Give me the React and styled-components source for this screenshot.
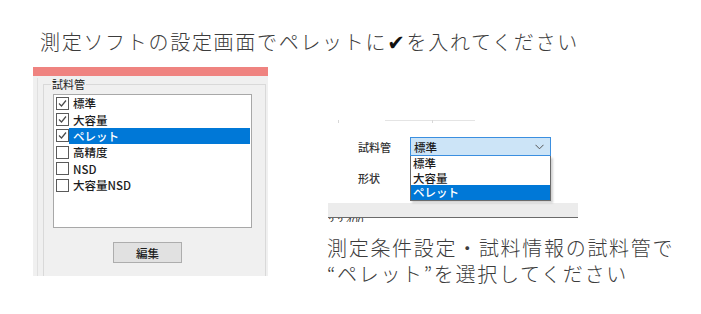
import React from "react";
import styled, { createGlobalStyle } from "styled-components";

const Global = createGlobalStyle`
  html, body { margin: 0; padding: 0; background: #ffffff; }
  body { font-family: "Noto Sans CJK JP", "Noto Sans", sans-serif; }
`;

const Page = styled.div`
  width: 701px;
  height: 314px;
  overflow: hidden;
  position: relative;
  background: #fff;
`;

const Caption = styled.div`
  font-family: "Noto Sans CJK JP", sans-serif;
  font-weight: 300;
  font-size: 20px;
  line-height: 26px;
  letter-spacing: 1.7px;
  color: #3c3c3c;
  white-space: nowrap;
`;

const Title = styled(Caption)`
  padding: 29px 0 0 40px;
`;

const Check = styled.span`
  font-family: "DejaVu Sans", sans-serif;
  font-weight: 700;
  color: #111;
  font-size: 21px;
`;

const Content = styled.div`
  display: flex;
  margin-top: 11px;
`;

const LeftPanel = styled.div`
  margin-left: 33px;
  width: 235px;
  height: 209px;
  display: flex;
  flex-direction: column;
  overflow: hidden;
`;

const PinkBar = styled.div`
  height: 9px;
  background: #ef8380;
`;

const GrayBody = styled.div`
  flex: 1;
  background: #f0f0f0;
  display: flex;
  padding: 2px 2px 0 4px;
  overflow: hidden;
`;

const Divider = styled.div`
  width: 1px;
  background: #e0e0e0;
  margin-right: 5px;
`;

const Group = styled.fieldset`
  margin: 0;
  padding: 0 0 0 9px;
  border: 1px solid #d9d9d9;
  flex: 1;
  height: 260px;
  min-width: 0;
`;

const Legend = styled.legend`
  font-size: 11px;
  line-height: 12px;
  color: #222;
  padding: 0 1px;
  margin-left: -2px;
`;

const ListBox = styled.div`
  margin-top: 4px;
  width: 197px;
  height: 132px;
  background: #fff;
  border: 1px solid #a8a8a8;
  display: flex;
  flex-direction: column;
`;

const Row = styled.div`
  display: flex;
  align-items: center;
  height: 16.4px;
  padding-left: 2px;
`;

const Box = styled.span`
  width: 11px;
  height: 11px;
  border: 1px solid #5a5a5a;
  background: #fff;
  flex: none;
  display: flex;
  align-items: center;
  justify-content: center;
`;

const Label = styled.span`
  flex: 1;
  height: 16px;
  display: flex;
  align-items: center;
  padding-left: 4px;
  margin-right: 1px;
  font-size: 11.5px;
  font-weight: 500;
  color: ${(p) => (p.$sel ? "#fff" : "#1c1c1c")};
  background: ${(p) => (p.$sel ? "#0078d7" : "transparent")};
`;

const EditButton = styled.div`
  margin: 14px 0 0 60px;
  width: 67px;
  height: 19px;
  border: 1px solid #adadad;
  background: #e1e1e1;
  display: flex;
  align-items: center;
  justify-content: center;
  font-size: 11.5px;
  font-weight: 500;
  color: #1c1c1c;
`;

const RightColumn = styled.div`
  margin-left: 60px;
  flex: 1;
  display: flex;
  flex-direction: column;
`;

const FaintLine = styled.div`
  margin-top: 53px;
  height: 2px;
  display: flex;
  align-items: flex-start;
`;

const Tick = styled.div`
  width: 1px;
  height: 3px;
  background: #d8d8d8;
  margin-left: ${(p) => p.$ml}px;
`;

const Rule = styled.div`
  width: ${(p) => p.$w}px;
  margin-left: ${(p) => p.$ml || 0}px;
  height: 1px;
  background: #e4e4e4;
`;

const FormRow = styled.div`
  display: flex;
  align-items: center;
  height: ${(p) => p.$h}px;
  margin-top: ${(p) => p.$mt}px;
  padding-left: 30px;
`;

const FormLabel = styled.span`
  width: 52px;
  font-size: 11px;
  font-weight: 500;
  color: #333;
`;

const ComboWrap = styled.div`
  position: relative;
`;

const Combo = styled.div`
  border: 1px solid #3b8fe0;
  background: #cce4f7;
  display: flex;
  align-items: center;
  justify-content: space-between;
  padding: 0 6px 0 3px;
  box-sizing: border-box;
  width: 141px;
  height: 19px;
  font-size: 11.5px;
  font-weight: 500;
  color: #1c1c1c;
`;

const Drop = styled.div`
  position: absolute;
  left: 0;
  top: 19px;
  width: 141px;
  box-sizing: border-box;
  border: 1px solid #6b6b6b;
  border-top: 0;
  background: #fff;
  box-shadow: 2px 2px 2px rgba(0, 0, 0, 0.18);
  display: flex;
  flex-direction: column;
`;

const DropItem = styled.div`
  height: 14.5px;
  display: flex;
  align-items: center;
  padding-left: 2px;
  font-size: 11.5px;
  font-weight: 500;
  color: ${(p) => (p.$sel ? "#fff" : "#1c1c1c")};
  background: ${(p) => (p.$sel ? "#0078d7" : "transparent")};
`;

const Band = styled.div`
  margin-top: 16px;
  width: 250px;
  height: 14px;
  background: #ececec;
`;

const BandEdge = styled.div`
  width: 250px;
  height: 4px;
  overflow: hidden;
  border-top: 1px solid #6a6a6a;
`;

const Version = styled.div`
  font-family: "Liberation Sans", sans-serif;
  font-style: italic;
  font-size: 10px;
  line-height: 10px;
  color: #333;
  letter-spacing: 0.3px;
  margin-top: -1px;
  white-space: nowrap;
`;

const Note = styled(Caption)`
  margin-left: -1px;
  margin-top: ${(p) => p.$mt || 0}px;
`;

const CheckSvg = () => (
  <svg width="9" height="9" viewBox="0 0 9 9">
    <path d="M1 4.5 L3.5 7 L8 1.5" fill="none" stroke="#4a4a4a" strokeWidth="1.2" />
  </svg>
);

const Chevron = () => (
  <svg width="9" height="6" viewBox="0 0 9 6">
    <path d="M0.5 0.8 L4.5 4.8 L8.5 0.8" fill="none" stroke="#555" strokeWidth="1" />
  </svg>
);

const items = [
  { t: "標準", c: true },
  { t: "大容量", c: true },
  { t: "ペレット", c: true, s: true },
  { t: "高精度", c: false },
  { t: "NSD", c: false },
  { t: "大容量NSD", c: false },
];

export default function App() {
  return (
    <Page>
      <Global />
      <Title>
        測定ソフトの設定画面でペレットに<Check>✔</Check>を入れてください
      </Title>
      <Content>
        <LeftPanel>
          <PinkBar />
          <GrayBody>
            <Divider />
            <Group>
              <Legend>試料管</Legend>
              <ListBox>
                {items.map((it) => (
                  <Row key={it.t}>
                    <Box>{it.c && <CheckSvg />}</Box>
                    <Label $sel={it.s}>{it.t}</Label>
                  </Row>
                ))}
              </ListBox>
              <EditButton>編集</EditButton>
            </Group>
          </GrayBody>
        </LeftPanel>
        <RightColumn>
          <FaintLine>
            <Tick $ml={10} />
            <Rule $w={47} $ml={46} />
            <Tick $ml={0} />
            <Rule $w={42} />
          </FaintLine>
          <FormRow $h={19} $mt={15}>
            <FormLabel>試料管</FormLabel>
            <ComboWrap>
              <Combo>
                <span>標準</span>
                <Chevron />
              </Combo>
              <Drop>
                <DropItem>標準</DropItem>
                <DropItem>大容量</DropItem>
                <DropItem $sel>ペレット</DropItem>
              </Drop>
            </ComboWrap>
          </FormRow>
          <FormRow $h={18} $mt={13}>
            <FormLabel>形状</FormLabel>
          </FormRow>
          <Band />
          <BandEdge>
            <Version>2.2.400</Version>
          </BandEdge>
          <Note $mt={13}>測定条件設定・試料情報の試料管で</Note>
          <Note>“ペレット”を選択してください</Note>
        </RightColumn>
      </Content>
    </Page>
  );
}
